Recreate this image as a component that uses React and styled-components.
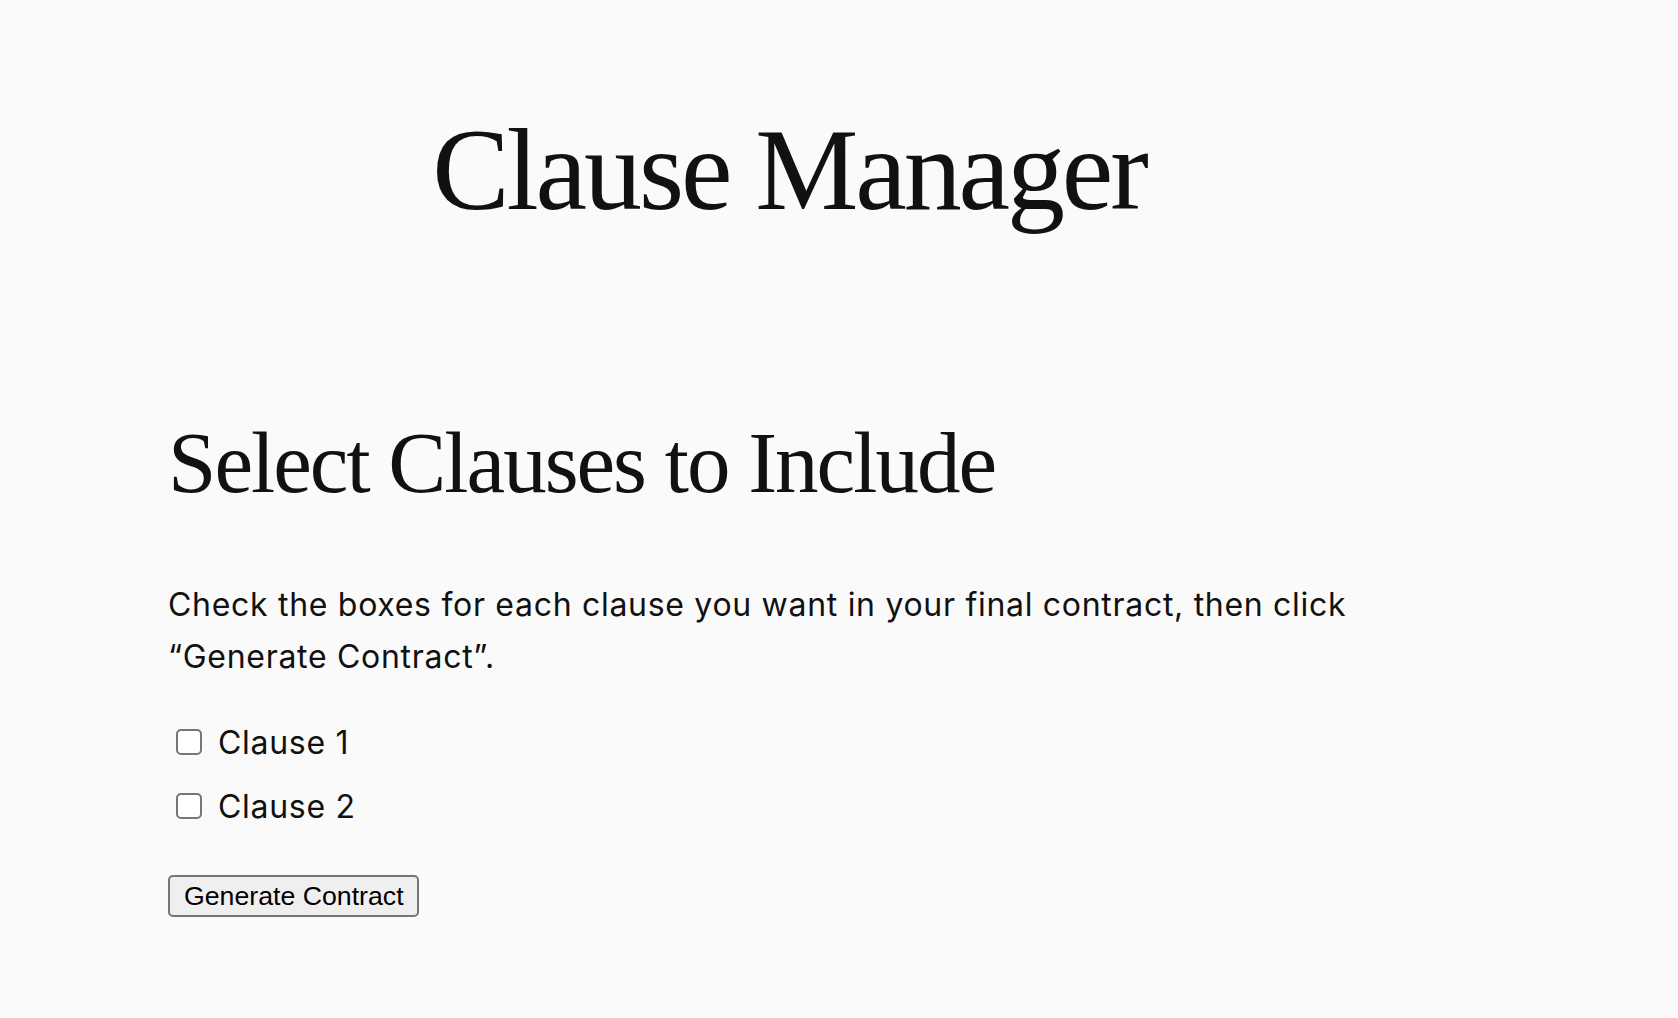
import React, { useState } from "react";
import styled, { createGlobalStyle } from "styled-components";

const GlobalStyle = createGlobalStyle`
  html, body {
    margin: 0;
    padding: 0;
    background: #fafafa;
  }
  * {
    box-sizing: border-box;
  }
`;

const Page = styled.main`
  min-height: 100vh;
  background: #fafafa;
  color: #111111;
  padding: 100px 0 60px 168px;
`;

const Container = styled.div`
  width: 1242px;
`;

const Title = styled.h1`
  margin: 0;
  font-family: "Liberation Serif", "DejaVu Serif", serif;
  font-weight: 400;
  font-size: 116px;
  line-height: 140px;
  letter-spacing: -3.1px;
  text-align: center;
  color: #111111;
`;

const Section = styled.section`
  margin-top: 168px;
  display: flex;
  flex-direction: column;
  align-items: flex-start;
`;

const Heading = styled.h2`
  margin: 0;
  font-family: "Liberation Serif", "DejaVu Serif", serif;
  font-weight: 400;
  font-size: 87px;
  line-height: 110px;
  letter-spacing: -2px;
  color: #111111;
`;

const Intro = styled.p`
  margin: 61px 0 0;
  font-family: Inter, "Noto Sans", sans-serif;
  font-size: 32px;
  line-height: 52px;
  letter-spacing: 0.7px;
  color: #111111;
`;

const ClauseList = styled.div`
  margin-top: 34px;
  display: flex;
  flex-direction: column;
  gap: 12px;
`;

const ClauseRow = styled.label`
  display: flex;
  align-items: center;
  height: 52px;
  font-family: Inter, "Noto Sans", sans-serif;
  font-size: 32px;
  line-height: 52px;
  letter-spacing: 0.7px;
  color: #111111;
  cursor: pointer;
`;

const Box = styled.input.attrs({ type: "checkbox" })`
  appearance: none;
  width: 26px;
  height: 26px;
  margin: 0 16px 2px 8px;
  border: 2px solid #767676;
  border-radius: 5px;
  background: #ffffff;
  cursor: pointer;
  position: relative;

  &:checked {
    background: #0075ff;
    border-color: #0075ff;
  }
  &:checked::after {
    content: "";
    position: absolute;
    left: 7px;
    top: 2px;
    width: 7px;
    height: 13px;
    border: solid #ffffff;
    border-width: 0 3px 3px 0;
    transform: rotate(45deg);
  }
`;

const GenerateButton = styled.button`
  margin-top: 42px;
  height: 42px;
  padding: 0 13px 0 14px;
  font-family: "Liberation Sans", Arial, sans-serif;
  font-size: 26.7px;
  line-height: 38px;
  color: #000000;
  background: #efefef;
  border: 2px solid #767676;
  border-radius: 5px;
  cursor: pointer;

  &:hover {
    background: #e5e5e5;
  }
`;

const clauses = ["Clause 1", "Clause 2"];

export default function App() {
  const [checked, setChecked] = useState({});

  function toggle(name) {
    setChecked({ ...checked, [name]: !checked[name] });
  }

  return (
    <>
      <GlobalStyle />
      <Page>
        <Container>
          <Title>Clause Manager</Title>
          <Section>
            <Heading>Select Clauses to Include</Heading>
            <Intro>
              Check the boxes for each clause you want in your final contract, then click
              “Generate Contract”.
            </Intro>
            <ClauseList>
              {clauses.map((name) => (
                <ClauseRow key={name}>
                  <Box checked={!!checked[name]} onChange={() => toggle(name)} />
                  {name}
                </ClauseRow>
              ))}
            </ClauseList>
            <GenerateButton type="button">Generate Contract</GenerateButton>
          </Section>
        </Container>
      </Page>
    </>
  );
}
